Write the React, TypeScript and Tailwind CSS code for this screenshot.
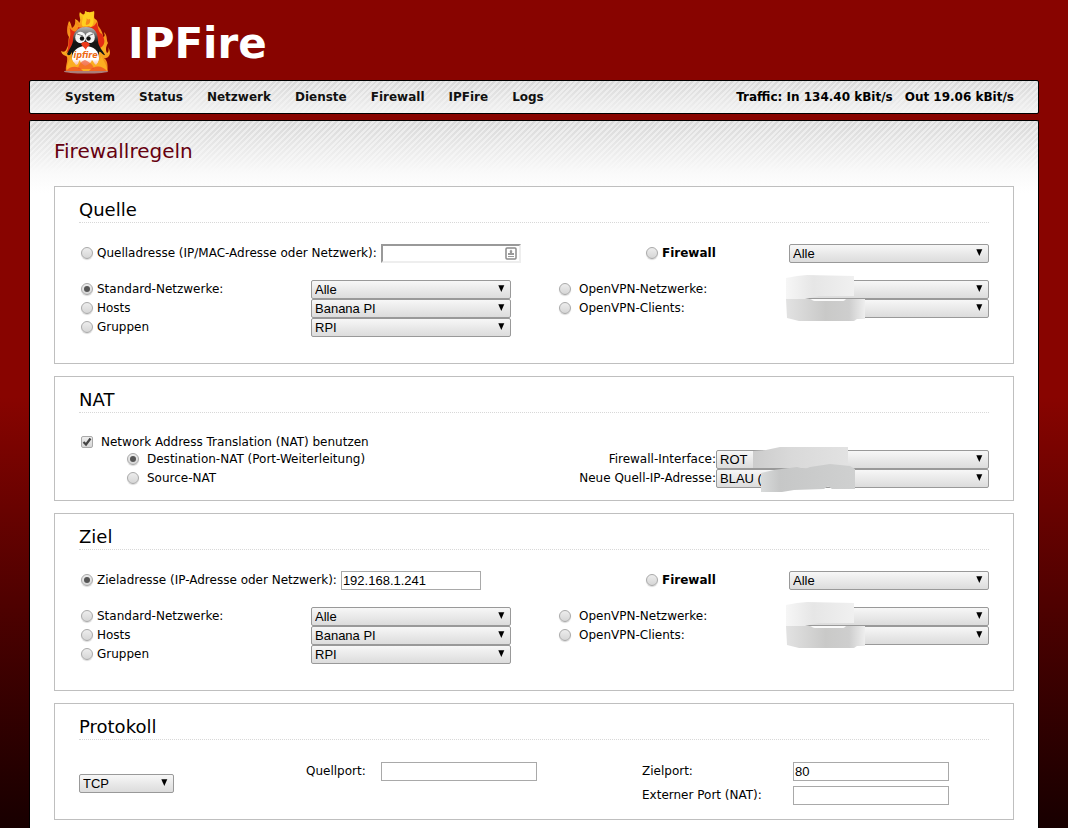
import React from 'react';

const menu = ['System', 'Status', 'Netzwerk', 'Dienste', 'Firewall', 'IPFire', 'Logs'];

const radioClass =
    "flex h-3 w-3 shrink-0 appearance-none items-center justify-center rounded-full border border-[#a9a9a9] bg-linear-to-b from-[#ededed] to-[#d6d6d6] shadow-[0_1px_1px_rgba(0,0,0,0.15)] checked:before:block checked:before:h-1.5 checked:before:w-1.5 checked:before:rounded-full checked:before:bg-[#555] checked:before:content-['']";

const Logo = () => (
    <svg width="50" height="66" viewBox="0 0 50 66" aria-hidden="true">
        <defs>
            <linearGradient id="flame" x1="0" y1="0" x2="0" y2="1">
                <stop offset="0" stopColor="#ffd21f" />
                <stop offset="0.3" stopColor="#f6891a" />
                <stop offset="0.65" stopColor="#f9b022" />
                <stop offset="1" stopColor="#f07816" />
            </linearGradient>
            <linearGradient id="head" x1="0" y1="0" x2="0" y2="1">
                <stop offset="0" stopColor="#b4b4b4" />
                <stop offset="0.16" stopColor="#777" />
                <stop offset="0.35" stopColor="#151515" />
            </linearGradient>
            <linearGradient id="belly" x1="0" y1="0" x2="0" y2="1">
                <stop offset="0" stopColor="#fff" />
                <stop offset="0.55" stopColor="#fff" />
                <stop offset="1" stopColor="#f4825a" />
            </linearGradient>
        </defs>
        <ellipse cx="25" cy="62.500" rx="22" ry="2" fill="#b8a6a0" opacity="0.75" />
        {/* outer flames */}
        <path d="M5 62 C4 57 7 53 6 48 C5 46 1 47 0 42 C3 44 5 42 6 39 C8 36 7 31 8 28 C5 24 6 17 8 12 C10 14 10 16 11 19 C14 17 15 13 14 10 C17 11 18 13 18 14 C21 11 17 7 19 3 C21 6 24 7 24 2 C28 4 31 3 33 2 C34 5 32 8 34 10 C38 12 36 16 38 18 C41 22 42 25 42 28 C45 27 43 25 43 23 C47 27 45 31 47 34 C44 39 45 42 46 44 C48 43 48 40 47 38 C52 46 46 50 43 49 C48 53 46 59 47 62 Z" fill="url(#flame)" />
        <path d="M7 14 C9 18 10 24 9 28 C6 34 9 38 5 44 L13 39 L39 39 C46 35 43 29 41 25 C38 24 37 20 36 13 C34 16 31 20 28 17 C28 14 23 15 22 19 C18 19 17 17 17 19 C16 22 14 23 12 22 C9 20 8 18 7 14 Z" fill="#e42c14" />
        <path d="M20 4 C24 8 20 12 21 16 C22 20 28 16 30 18 C35 14 31 9 33 3 C28 5 25 3 24 5 C23 8 21 7 20 4 Z" fill="#ffcf1f" />
        <path d="M25 8 C27 11 24 13 25 16 C28 16 30 13 29 10 C27 11 26 10 25 8 Z M15 12 C13 15 17 18 19 16 C17 15 18 13 15 12 Z" fill="#f58a1a" />
        {/* penguin */}
        <path d="M25 18 C16 18 12 24 12 31 C12 36 8 40 6 45 C8 48 10 45 11 43 C10 55 15 61 25 61 C34 61 38 55 38 43 C40 42 42 47 44 46 C42 42 37 37 37 32 C37 24 34 18 25 18 Z" fill="url(#head)" />
        <path d="M24 37 C17 37 11 42 11 49 C11 56 16 61 25 61 C33 61 38 56 38 49 C38 42 33 37 24 37 Z" fill="url(#belly)" />
        <ellipse cx="19.500" cy="28.500" rx="5.300" ry="5.800" fill="#f4f4f4" />
        <ellipse cx="29" cy="28.500" rx="4.800" ry="5.600" fill="#f4f4f4" />
        <circle cx="21" cy="29.500" r="2.200" fill="#111" />
        <circle cx="27.500" cy="29.500" r="2.200" fill="#111" />
        <path d="M16 25 L22 27 M27 27 L32 25" stroke="#555" strokeWidth="0.800" />
        <path d="M20 35 C22 32 27 32 29 36 C27 37 25 39 25 41 C24 39 22 38 20 35 Z" fill="#ed3b1b" />
        {/* lower flames and feet */}
        <path d="M6 62 C5 56 8 52 10 48 C11 52 13 53 15 56 C18 56 17 52 19 51 C19 54 22 55 24 57 C28 55 30 54 31 51 C33 53 33 55 35 56 C38 53 38 50 41 47 C41 51 47 56 46 62 Z" fill="#fbae21" />
        <path d="M17 60 C18 55 19 53 24 51 C28 53 32 55 33 60 Z" fill="#f0552b" opacity="0.65" />
        <path d="M5 62 C9 57 17 56 22 62 Z M28 62 C33 56 41 56 46 62 Z" fill="#ee4a22" opacity="0.75" />
        <text x="24.500" y="49" textAnchor="middle" fontSize="8" fontWeight="bold" fontStyle="italic" fontFamily="DejaVu Sans, sans-serif" fill="#ee6a12">ipfire</text>
    </svg>
);

type SelectProps = { label: string; value: string; width: string };

const Select = ({ label, value, width }: SelectProps) => (
    <div className={`relative h-[19px] shrink-0 ${width}`}>
        <select
            aria-label={label}
            className="block h-full w-full appearance-none rounded-xs border border-[#999] bg-linear-to-b from-[#f7f7f7] to-[#dcdcdc] pl-[3px] font-['Liberation_Sans',sans-serif] text-[13px] leading-4 text-black"
        >
            <option>{value}</option>
        </select>
        <svg className="pointer-events-none absolute top-[5px] right-1.5" width="7" height="7" viewBox="0 0 7 7" aria-hidden="true">
            <path d="M0.300 0.300 H6.300 L3.300 7 Z" fill="#000" />
        </svg>
    </div>
);

type RadioProps = { text: string; name: string; checked?: boolean; gap?: string; bold?: boolean };

const Radio = ({ text, name, checked, gap = 'gap-1', bold = false }: RadioProps) => (
    <label className={`flex h-[19px] items-center pb-0.5 ${gap} ${bold ? 'font-bold' : ''}`}>
        <input type="radio" name={name} defaultChecked={checked} className={radioClass} />
        {text}
    </label>
);

const Panel = ({ title, children }: { title: string; children: React.ReactNode }) => (
    <section className="border border-[#bfbfbf] bg-white px-6 pt-[11px]">
        <h2 className="h-[25px] border-b border-dotted border-[#d8d8d8] text-lg leading-6">{title}</h2>
        {children}
    </section>
);

// smeared areas over the private values
const VpnSmudge = ({ id }: { id: string }) => (
    <svg className="pointer-events-none absolute -top-[6px] -left-1" width="84" height="50" viewBox="0 0 84 50" aria-hidden="true">
        <defs>
            <linearGradient id={`${id}a`}>
                <stop offset="0" stopColor="#f6f6f6" />
                <stop offset="0.4" stopColor="#e6e6e6" />
                <stop offset="1" stopColor="#f0f0f0" />
            </linearGradient>
            <linearGradient id={`${id}b`}>
                <stop offset="0" stopColor="#e2e2e2" />
                <stop offset="0.5" stopColor="#c9c9c8" />
                <stop offset="0.8" stopColor="#cecece" />
                <stop offset="1" stopColor="#eeeeee" />
            </linearGradient>
        </defs>
        <path d="M1 4 L12 2 L22 1 L69 2 V22 L34 22 L20 25 L1 25 Z" fill={`url(#${id}a)`} />
        <path d="M1 25 L24 25 L30 27 L58 27 L62 25 H80 V45 L72 45 L69 47 H14 L2 44 Z" fill={`url(#${id}b)`} />
        <path d="M24 25 L30 27 L58 27 L62 25 Z" fill="#fafafa" />
    </svg>
);

const NatSmudge = () => (
    <svg className="pointer-events-none absolute -top-[4px] left-9" width="106" height="48" viewBox="0 0 106 48" aria-hidden="true">
        <defs>
            <linearGradient id="nat-a">
                <stop offset="0" stopColor="#cccccc" />
                <stop offset="0.4" stopColor="#d9d9d9" />
                <stop offset="1" stopColor="#e2e2e2" />
            </linearGradient>
            <linearGradient id="nat-b">
                <stop offset="0" stopColor="#d9dbdb" />
                <stop offset="0.2" stopColor="#c6c7c7" />
                <stop offset="1" stopColor="#cfd0d0" />
            </linearGradient>
        </defs>
        <path d="M1 5 L14 4 L28 1 H96 V22 L60 23 L28 22 L1 22 Z" fill="url(#nat-a)" />
        <path d="M9 27 L22 24 L45 21 L53 23 L58 21 L78 18 L98 20 L103 23 V43 H80 L76 40 L72 43 L42 44 L30 46 L9 46 Z" fill="url(#nat-b)" />
    </svg>
);

type AddressProps = { id: string; title: string; address: string; value?: string; useAddress?: boolean };

const AddressPanel = ({ id, title, address, value = '', useAddress = false }: AddressProps) => (
    <Panel title={title}>
        <div className="flex pt-[21px] pb-[17px]">
            <div className="flex flex-1 items-center pl-0.5">
                <Radio text={address} name={id} checked={useAddress} />
                {useAddress ? (
                    <input aria-label={address} defaultValue={value} className="ml-1 h-[19px] w-[140px] border border-[#a9a9a9] bg-white px-px font-['Liberation_Sans',sans-serif] text-[13px]" />
                ) : (
                    <div className="relative ml-1 h-[19px] w-[140px]">
                        <input aria-label={address} defaultValue={value} className="block h-full w-full border-2 border-t-[#999] border-r-[#eee] border-b-[#eee] border-l-[#999] bg-white px-0.5" />
                        <svg className="absolute top-[3px] right-1" width="12" height="13" viewBox="0 0 12 13" aria-hidden="true">
                            <rect x="1" y="1" width="10" height="11" rx="1" fill="#fff" stroke="#8a8a8a" strokeWidth="1.500" />
                            <path d="M6 2.500 L7.300 4 L7 6 H9 V8 H3 V6 H5 L4.700 4 Z M3 9 H9 V10 H3 Z" fill="#999" />
                        </svg>
                    </div>
                )}
            </div>
            <div className="w-[143px]">
                <Radio text="Firewall" name={id} bold />
            </div>
            <Select label={`${title} Firewall`} value="Alle" width="w-[200px]" />
        </div>
        <div className="flex pb-[26px]">
            <div className="w-[232px] pl-0.5">
                <Radio text="Standard-Netzwerke:" name={id} checked={!useAddress} />
                <Radio text="Hosts" name={id} />
                <Radio text="Gruppen" name={id} />
            </div>
            <div>
                <Select label={`${title} Standard-Netzwerke`} value="Alle" width="w-[200px]" />
                <Select label={`${title} Hosts`} value="Banana PI" width="w-[200px]" />
                <Select label={`${title} Gruppen`} value="RPI" width="w-[200px]" />
            </div>
            <div className="flex-1 pl-12">
                <Radio text="OpenVPN-Netzwerke:" name={id} gap="gap-2" />
                <Radio text="OpenVPN-Clients:" name={id} gap="gap-2" />
            </div>
            <div className="relative">
                <Select label={`${title} OpenVPN-Netzwerke`} value="" width="w-[200px]" />
                <Select label={`${title} OpenVPN-Clients`} value="" width="w-[200px]" />
                <VpnSmudge id={id} />
            </div>
        </div>
    </Panel>
);

const portInput = "h-[19px] w-[156px] border border-[#a9a9a9] bg-white px-px font-['Liberation_Sans',sans-serif] text-[13px]";

const App = () => {
    return (
        <div className="flex min-h-screen flex-col bg-linear-to-b from-[#880400] from-48% to-[#180000] px-[29px] font-['DejaVu_Sans',sans-serif] text-xs text-black">
            <header className="flex h-20 items-center gap-[17px] pt-1 pl-8">
                <Logo />
                <h1 className="pt-1 text-[42px] leading-none font-bold text-white">IPFire</h1>
            </header>

            <nav className="flex h-[34px] items-center justify-between rounded-xs border border-black bg-[linear-gradient(to_bottom,rgba(245,245,245,0),rgba(245,245,245,0.9)),repeating-linear-gradient(135deg,#d8d8d8_0_2px,#eaeaea_2px_4px)] pr-6 pl-[35px] font-bold">
                <ul className="flex gap-6">
                    {menu.map((item) => (
                        <li key={item}>
                            <a href="#" className="text-[#111]">{item}</a>
                        </li>
                    ))}
                </ul>
                <div className="flex gap-3">
                    <span>Traffic: In 134.40 kBit/s</span>
                    <span>Out 19.06 kBit/s</span>
                </div>
            </nav>

            <main className="mt-1.5 flex-1 rounded-t-xs border border-b-0 border-black bg-white bg-[linear-gradient(to_bottom,rgba(250,250,250,0),rgba(250,250,250,1)_52px,#fff_72px),repeating-linear-gradient(135deg,#d8d8d8_0_2px,#eaeaea_2px_4px)] px-6 pb-2">
                <h1 className="pt-4 pb-[21px] text-xl leading-7 text-[#66000f]">Firewallregeln</h1>

                <div className="flex flex-col gap-3">
                    <AddressPanel id="quelle" title="Quelle" address="Quelladresse (IP/MAC-Adresse oder Netzwerk):" />

                    <Panel title="NAT">
                        <div className="flex items-end justify-between pt-5 pb-3">
                            <div className="pl-0.5">
                                <label className="flex h-[17px] items-center gap-2">
                                    <span className="relative h-3 w-3">
                                        <input type="checkbox" defaultChecked className="block h-3 w-3 appearance-none rounded-xs border border-[#a9a9a9] bg-linear-to-b from-[#ededed] to-[#d6d6d6]" />
                                        <svg className="pointer-events-none absolute top-0 left-0" width="12" height="12" viewBox="0 0 12 12" aria-hidden="true">
                                            <path d="M2.500 6 L5 8.500 L9.500 2.500" fill="none" stroke="#444" strokeWidth="2.200" />
                                        </svg>
                                    </span>
                                    Network Address Translation (NAT) benutzen
                                </label>
                                <div className="pl-[46px]">
                                    <Radio text="Destination-NAT (Port-Weiterleitung)" name="nat" gap="gap-2" checked />
                                    <Radio text="Source-NAT" name="nat" gap="gap-2" />
                                </div>
                            </div>
                            <div className="flex">
                                <div className="text-right leading-[19px]">
                                    <div>Firewall-Interface:</div>
                                    <div>Neue Quell-IP-Adresse:</div>
                                </div>
                                <div className="relative">
                                    <Select label="Firewall-Interface" value="ROT" width="w-[273px]" />
                                    <Select label="Neue Quell-IP-Adresse" value="BLAU (" width="w-[273px]" />
                                    <NatSmudge />
                                </div>
                            </div>
                        </div>
                    </Panel>

                    <AddressPanel id="ziel" title="Ziel" address="Zieladresse (IP-Adresse oder Netzwerk):" value="192.168.1.241" useAddress />

                    <Panel title="Protokoll">
                        <div className="flex pt-[22px] pb-3.5 pr-10">
                            <div className="flex flex-1 items-center">
                                <Select label="Protokoll" value="TCP" width="w-[95px]" />
                            </div>
                            <label className="flex items-start leading-[19px]">
                                <span className="w-[75px]">Quellport:</span>
                                <input className={portInput} />
                            </label>
                            <div className="ml-[105px] flex flex-col gap-[5px] leading-[19px]">
                                <label className="flex">
                                    <span className="w-[151px]">Zielport:</span>
                                    <input defaultValue="80" className={portInput} />
                                </label>
                                <label className="flex">
                                    <span className="w-[151px]">Externer Port (NAT):</span>
                                    <input className={portInput} />
                                </label>
                            </div>
                        </div>
                    </Panel>
                </div>
            </main>
        </div>
    );
};

export default App;
